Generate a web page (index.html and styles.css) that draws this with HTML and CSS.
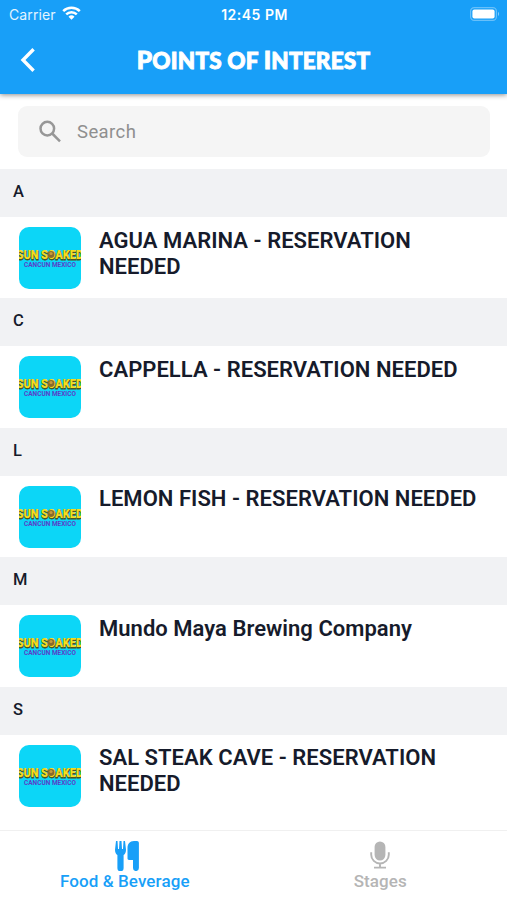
FILE: index.html
```
<!DOCTYPE html>
<html lang="en">
<head>
    <meta charset="UTF-8">
    <meta name="viewport" content="width=device-width, initial-scale=1.0">
    <title>Points of Interest</title>
    <link rel="stylesheet" href="styles.css">
</head>
<body>
    <svg class="defs" width="0" height="0">
        <symbol id="thumb" viewBox="0 0 62 62">
            <rect width="62" height="62" fill="#0cd6f7"/>
            <g font-family="Roboto, sans-serif" font-weight="900" font-size="13.5">
                <g fill="#4a5320" stroke="#4a5320" stroke-width=".8">
                    <text x="-2" y="32.800" textLength="22" lengthAdjust="spacingAndGlyphs">SUN</text>
                    <text x="22.500" y="32.800" textLength="42" lengthAdjust="spacingAndGlyphs">SOAKED</text>
                </g>
                <g fill="#f5dc1e">
                    <text x="-2.500" y="32" textLength="22" lengthAdjust="spacingAndGlyphs">SUN</text>
                    <text x="22" y="32" textLength="42" lengthAdjust="spacingAndGlyphs">SOAKED</text>
                </g>
            </g>
            <circle cx="32" cy="27.500" r="3.400" fill="#8b6a2b"/>
            <circle cx="32" cy="26.500" r="1.600" fill="#c99a3a"/>
            <text x="5" y="40.300" font-family="Roboto, sans-serif" font-weight="700" font-size="6.800" textLength="52" lengthAdjust="spacingAndGlyphs" fill="#5a3fc8">CANCUN MEXICO</text>
        </symbol>
    </svg>

    <header class="header">
        <div class="status">
            <div class="carrier">
                <span>Carrier</span>
                <svg width="19" height="14" viewBox="0 0 19 14" fill="none" stroke="#fff" stroke-width="2.5">
                    <path d="M1.2 5.2a11.8 11.8 0 0 1 16.6 0"/>
                    <path d="M4.2 8.3a7.6 7.6 0 0 1 10.6 0"/>
                    <path d="M9.5 13.8L6.5 10.8a4.3 4.3 0 0 1 6 0z" fill="#fff" stroke="none"/>
                </svg>
            </div>
            <div class="time">12:45 PM</div>
            <svg class="battery" width="30" height="14" viewBox="0 0 30 14">
                <rect x="0.6" y="0.6" width="25.8" height="12.8" rx="3.6" fill="none" stroke="#fff" stroke-opacity=".35" stroke-width="1.2"/>
                <rect x="2.4" y="2.4" width="22.2" height="9.2" rx="2" fill="#fff"/>
                <path d="M28 4.8q2 2.2 0 4.4z" fill="#fff" fill-opacity=".5"/>
            </svg>
        </div>
        <div class="titlebar">
            <svg class="back" width="16" height="26" viewBox="0 0 16 26" fill="none" stroke="#fff" stroke-width="3.4">
                <path d="M13.6 2.2L3 13l10.6 10.8"/>
            </svg>
            <h1><b>P</b>OINTS OF <b>I</b>NTEREST</h1>
        </div>
    </header>

    <div class="search">
        <svg width="24" height="24" viewBox="0 0 24 24" fill="none" stroke="#979797" stroke-width="2.5">
            <circle cx="8.3" cy="8.6" r="6.8"/>
            <path d="M13.2 13.5l7.8 7.8"/>
        </svg>
        <span>Search</span>
    </div>

    <main>
        <h2>A</h2>
        <div class="item">
            <svg class="thumb"><use href="#thumb"/></svg>
            <p>AGUA MARINA - RESERVATION NEEDED</p>
        </div>
        <h2>C</h2>
        <div class="item">
            <svg class="thumb"><use href="#thumb"/></svg>
            <p>CAPPELLA - RESERVATION NEEDED</p>
        </div>
        <h2>L</h2>
        <div class="item">
            <svg class="thumb"><use href="#thumb"/></svg>
            <p>LEMON FISH - RESERVATION NEEDED</p>
        </div>
        <h2>M</h2>
        <div class="item">
            <svg class="thumb"><use href="#thumb"/></svg>
            <p>Mundo Maya Brewing Company</p>
        </div>
        <h2>S</h2>
        <div class="item">
            <svg class="thumb"><use href="#thumb"/></svg>
            <p>SAL STEAK CAVE - RESERVATION NEEDED</p>
        </div>
    </main>

    <nav class="tabs">
        <div class="tab active">
            <svg width="26" height="30" viewBox="0 0 26 30" fill="currentColor">
                <path d="M2 0h1.500l.5 8h1l.5-8h2L8 8h1l.5-8H11l1 8.800c0 2.600-.9 4.300-2.400 5.200v13.200a2.500 2.500 0 0 1-6.200 0V14C1.900 13.100 1 11.400 1 8.800z"/>
                <path d="M20 0h3c1.100 0 1.900.8 1.900 1.900v25.200a2.700 2.700 0 0 1-5.900 0V19h-4c-1 0-1.500-.5-1.500-1.400V7C13.500 3 15.700 0 20 0z"/>
            </svg>
            <span>Food &amp; Beverage</span>
        </div>
        <div class="tab">
            <svg width="20" height="30" viewBox="0 0 20 30" fill="none" stroke="currentColor" stroke-width="1.9">
                <rect x="4.6" y="0.5" width="10.8" height="19" rx="5.4" fill="currentColor" stroke="none"/>
                <path d="M1.200 11.200v2.500a8.800 8.800 0 0 0 17.600 0v-2.500M10 22.500v4M4 26.600h12"/>
            </svg>
            <span>Stages</span>
        </div>
    </nav>
</body>
</html>
```

FILE: styles.css
```
* {
    box-sizing: border-box;
}
body {
    margin: 0;
    height: 900px;
    display: flex;
    flex-direction: column;
    overflow: hidden;
    background: #fff;
    color: #161b2b;
    font-family: Roboto, sans-serif;
}
.defs {
    display: none;
}
h1, h2, p {
    margin: 0;
}
.header {
    height: 94px;
    background: #189ff8;
    color: #fff;
    box-shadow: 0 1px 5px rgba(0, 0, 0, 0.45);
}
.status {
    display: grid;
    grid-template-columns: 1fr auto 1fr;
    align-items: center;
    height: 28px;
    padding: 0 7px 0 9px;
    font-family: Inter, sans-serif;
    font-size: 14px;
}
.carrier {
    display: flex;
    align-items: center;
    gap: 6px;
    color: #e3f4ff;
    letter-spacing: 0.1px;
}
.carrier svg {
    margin-top: -2px;
}
.time {
    font-weight: 600;
    letter-spacing: 0.5px;
}
.battery {
    justify-self: end;
    margin-top: -1px;
}
.titlebar {
    display: grid;
    grid-template-columns: 40px 1fr 40px;
    align-items: center;
    height: 64px;
    padding: 0 20px;
}
h1 {
    text-align: center;
    white-space: nowrap;
    font-family: Lato, sans-serif;
    font-size: 22.5px;
    font-weight: 900;
    line-height: 30px;
    letter-spacing: 0.2px;
    -webkit-text-stroke: 0.9px #fff;
}
h1 b {
    font-size: 24.5px;
    font-weight: 900;
}
.search {
    display: flex;
    align-items: center;
    gap: 14px;
    height: 51px;
    margin: 12px 17px 12px 18px;
    padding-left: 21px;
    border-radius: 9px;
    background: #f5f5f5;
    color: #8f8f8f;
    font-size: 18.5px;
    letter-spacing: 0.4px;
}
h2 {
    height: 48px;
    padding-left: 13px;
    background: #f1f2f4;
    font-size: 16.5px;
    font-weight: 500;
    line-height: 46px;
}
.item {
    display: flex;
    gap: 18px;
    height: 81.4px;
    padding: 10px 20px 0 19px;
}
.thumb {
    flex: none;
    width: 62px;
    height: 62px;
    border-radius: 10px;
}
.item p {
    padding-top: 0.5px;
    font-size: 22px;
    font-weight: 600;
    line-height: 26px;
    letter-spacing: 0.03px;
}
.tabs {
    display: grid;
    grid-template-columns: 1fr 1fr;
    height: 70px;
    margin-top: auto;
    border-top: 1px solid #f0f0f0;
}
.tab {
    display: flex;
    flex-direction: column;
    align-items: center;
    padding-top: 10px;
    color: #b5b5b5;
    font-size: 17px;
    font-weight: 500;
    line-height: 20px;
    letter-spacing: 0.1px;
}
.tab.active {
    color: #189ff8;
}
.tab.active span {
    margin-right: 4px;
}
```
